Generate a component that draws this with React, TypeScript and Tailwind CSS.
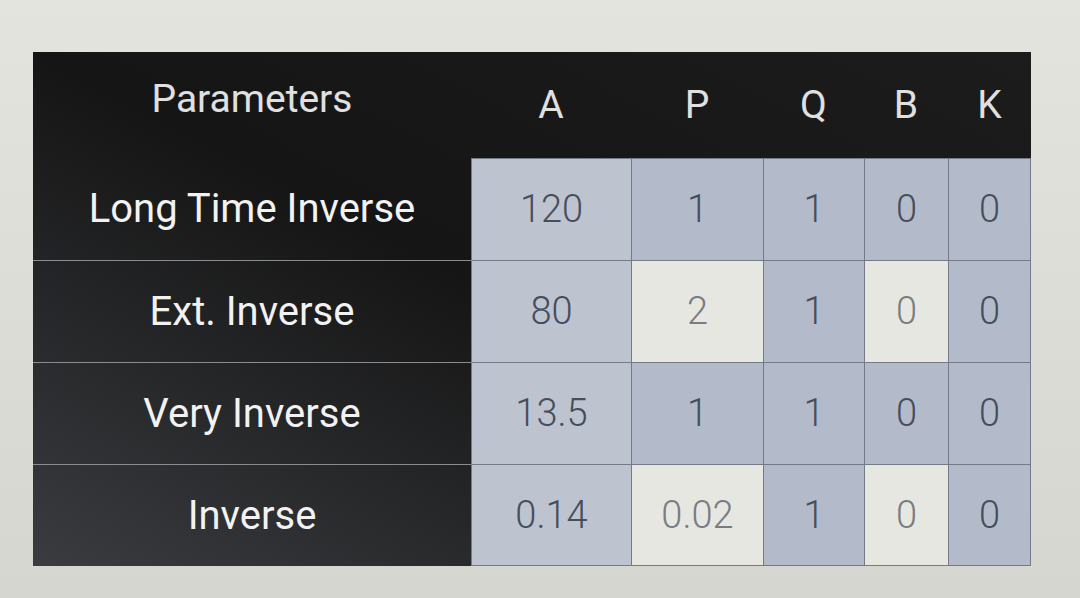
const rows = [
  { name: "Long Time Inverse", vals: ["120", "1", "1", "0", "0"], light: [] as number[] },
  { name: "Ext. Inverse", vals: ["80", "2", "1", "0", "0"], light: [1, 3] },
  { name: "Very Inverse", vals: ["13.5", "1", "1", "0", "0"], light: [] as number[] },
  { name: "Inverse", vals: ["0.14", "0.02", "1", "0", "0"], light: [1, 3] },
]

const heads = ["A", "P", "Q", "B", "K"]

export default function App() {
  return (
    <div className="w-[1080px] h-[598px] bg-gradient-to-b from-[#e4e4de] to-[#d6d6d0] pt-[52px] pl-[33px] font-['Roboto',sans-serif]">
      <div className="w-[998px] bg-gradient-to-tr from-[#3a3c40] via-[#151515] to-[#1c1c1c]">
        <div className="grid grid-cols-[438px_160px_132px_101px_84px_83px] h-[106px] items-center text-[39px] text-[#e0e0e0]">
          <div className="text-center -mt-3">Parameters</div>
          {heads.map(h => (
            <div key={h} className="text-center">{h}</div>
          ))}
        </div>
        {rows.map((r, i) => (
          <div key={r.name} className="grid grid-cols-[438px_160px_132px_101px_84px_83px] h-[102px]">
            <div className={`flex items-center justify-center text-[40px] text-[#f2f2f2] ${i > 0 ? "border-t border-[#8a8c90]" : ""}`}>
              {r.name}
            </div>
            {r.vals.map((v, j) => (
              <div
                key={j}
                className={`flex items-center justify-center text-[38px] font-light border-t border-l border-[#747a86] ${j === 4 ? "border-r" : ""} ${i === 3 ? "border-b" : ""} ${r.light.includes(j) ? "bg-[#e7e7e1] text-[#7a7c82]" : j === 0 ? "bg-[#bec4cf] text-[#464d5b]" : "bg-[#b3bbca] text-[#464d5b]"}`}
              >
                {v}
              </div>
            ))}
          </div>
        ))}
      </div>
    </div>
  )
}
